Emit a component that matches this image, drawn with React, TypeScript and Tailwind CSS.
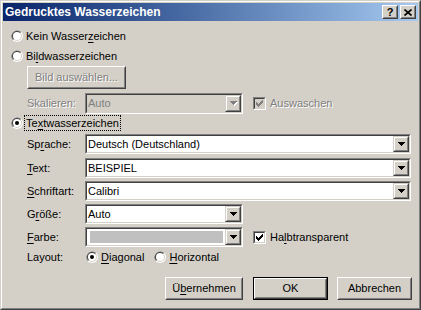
import type { ReactNode } from 'react';

// Classic Windows dialog: "Gedrucktes Wasserzeichen"

function Sunken({
  className = '',
  inner = '',
  children,
}: {
  className?: string;
  inner?: string;
  children?: ReactNode;
}) {
  return (
    <div
      className={`shrink-0 border border-t-[#808080] border-l-[#808080] border-r-white border-b-white ${className}`}
    >
      <div
        className={`flex h-full border border-t-[#404040] border-l-[#404040] border-r-[#d4d0c8] border-b-[#d4d0c8] ${inner}`}
      >
        {children}
      </div>
    </div>
  );
}

function Arrow({ disabled }: { disabled?: boolean }) {
  const fill = disabled ? '#808080' : '#000';
  return (
    <svg width="8" height="5" viewBox="0 0 8 5" shapeRendering="crispEdges">
      {disabled && (
        <g fill="#fff">
          <rect x="1" y="1" width="7" height="1" />
          <rect x="2" y="2" width="5" height="1" />
          <rect x="3" y="3" width="3" height="1" />
          <rect x="4" y="4" width="1" height="1" />
        </g>
      )}
      <g fill={fill}>
        <rect x="0" y="0" width="7" height="1" />
        <rect x="1" y="1" width="5" height="1" />
        <rect x="2" y="2" width="3" height="1" />
        <rect x="3" y="3" width="1" height="1" />
      </g>
    </svg>
  );
}

function DropButton({ disabled }: { disabled?: boolean }) {
  return (
    <div className="h-full w-[16px] shrink-0 border border-t-[#d4d0c8] border-l-[#d4d0c8] border-r-[#404040] border-b-[#404040]">
      <div className="flex h-full items-center justify-center border border-t-white border-l-white border-r-[#808080] border-b-[#808080] bg-[#d4d0c8] pl-px">
        <Arrow disabled={disabled} />
      </div>
    </div>
  );
}

function Combo({
  className,
  value,
  disabled,
  swatch,
}: {
  className: string;
  value?: string;
  disabled?: boolean;
  swatch?: boolean;
}) {
  return (
    <Sunken
      className={className}
      inner={disabled ? 'bg-[#d4d0c8]' : 'bg-white'}
    >
      <div
        className={`flex min-w-0 flex-1 items-center pl-px ${disabled ? 'text-[#808080]' : ''}`}
      >
        {swatch ? (
          <div className="mx-[2px] h-[12px] flex-1 bg-[#c0c0c0]" />
        ) : (
          value
        )}
      </div>
      <DropButton disabled={disabled} />
    </Sunken>
  );
}

function RadioDot({ checked }: { checked?: boolean }) {
  return (
    <svg width="12" height="12" viewBox="0 0 12 12" className="shrink-0">
      <circle cx="6" cy="6" r="6" fill="#fff" />
      <path d="M1.76 10.24 A6 6 0 0 1 10.24 1.76 Z" fill="#808080" />
      <circle cx="6" cy="6" r="5" fill="#d4d0c8" />
      <path d="M2.46 9.54 A5 5 0 0 1 9.54 2.46 Z" fill="#404040" />
      <circle cx="6" cy="6" r="4" fill="#fff" />
      {checked && <circle cx="6" cy="6" r="2" fill="#000" />}
    </svg>
  );
}

function Radio({
  checked,
  focused,
  className = '',
  children,
}: {
  checked?: boolean;
  focused?: boolean;
  className?: string;
  children: ReactNode;
}) {
  return (
    <div className={`flex h-[16px] items-center ${className}`}>
      <RadioDot checked={checked} />
      <span
        className={`ml-px border px-px leading-[14px] ${focused ? 'border-dotted border-black' : 'border-transparent'}`}
      >
        {children}
      </span>
    </div>
  );
}

function Check({ disabled }: { disabled?: boolean }) {
  const fill = disabled ? '#808080' : '#000';
  return (
    <Sunken
      className="h-[13px] w-[13px]"
      inner={`items-center justify-center ${disabled ? 'bg-[#d4d0c8]' : 'bg-white'}`}
    >
      <svg width="7" height="7" viewBox="0 0 7 7" shapeRendering="crispEdges">
        <g fill={fill}>
          <rect x="0" y="2" width="1" height="3" />
          <rect x="1" y="3" width="1" height="3" />
          <rect x="2" y="4" width="1" height="3" />
          <rect x="3" y="3" width="1" height="3" />
          <rect x="4" y="2" width="1" height="3" />
          <rect x="5" y="1" width="1" height="3" />
          <rect x="6" y="0" width="1" height="3" />
        </g>
      </svg>
    </Sunken>
  );
}

function U({ children }: { children: ReactNode }) {
  return <span className="underline underline-offset-[2px]">{children}</span>;
}

const grayed = 'text-[#808080] [text-shadow:1px_1px_0_#fff]';

function PushButton({
  className,
  isDefault,
  disabled,
  children,
}: {
  className: string;
  isDefault?: boolean;
  disabled?: boolean;
  children: ReactNode;
}) {
  if (isDefault) {
    return (
      <div className={`shrink-0 border border-black ${className}`}>
        <div className="h-full border border-t-white border-l-white border-r-[#404040] border-b-[#404040]">
          <div className="flex h-full items-center justify-center border border-transparent border-r-[#808080] border-b-[#808080]">
            {children}
          </div>
        </div>
      </div>
    );
  }
  return (
    <div
      className={`shrink-0 border border-t-white border-l-white border-r-[#404040] border-b-[#404040] ${className}`}
    >
      <div
        className={`flex h-full items-center justify-center border border-t-[#d4d0c8] border-l-[#d4d0c8] border-r-[#808080] border-b-[#808080] ${disabled ? grayed : ''}`}
      >
        {children}
      </div>
    </div>
  );
}

function CaptionButton({ children }: { children: ReactNode }) {
  return (
    <div className="h-[14px] w-[16px] border border-t-white border-l-white border-r-[#404040] border-b-[#404040] bg-[#d4d0c8]">
      <div className="flex h-full items-center justify-center border border-transparent border-r-[#808080] border-b-[#808080]">
        {children}
      </div>
    </div>
  );
}

function FieldRow({
  label,
  className = '',
  children,
}: {
  label: ReactNode;
  className?: string;
  children: ReactNode;
}) {
  return (
    <div className={`ml-[24px] flex items-center ${className}`}>
      <span className="w-[58px] shrink-0">{label}</span>
      {children}
    </div>
  );
}

export default function App() {
  return (
    <div className="h-[310px] w-[421px] select-none border border-t-[#d4d0c8] border-l-[#d4d0c8] border-r-[#404040] border-b-[#404040] font-['Liberation_Sans',Arial,sans-serif] text-[11px] leading-none text-black">
      <div className="flex h-full flex-col border border-t-white border-l-white border-r-[#808080] border-b-[#808080] bg-[#d4d0c8] p-px">
        {/* title bar */}
        <div className="flex h-[18px] shrink-0 items-center bg-linear-to-r from-[#0a246a] to-[#a6caf0] pl-[2px] pr-[2px]">
          <span className="flex-1 text-[12px] font-bold text-white">
            Gedrucktes Wasserzeichen
          </span>
          <CaptionButton>
            <span className="text-[11px] font-bold leading-none">?</span>
          </CaptionButton>
          <div className="ml-[2px]">
            <CaptionButton>
              <svg width="8" height="7" viewBox="0 0 8 7">
                <path
                  d="M0.5 0.5 L7.5 6.5 M7.5 0.5 L0.5 6.5"
                  stroke="#000"
                  strokeWidth="1.6"
                />
              </svg>
            </CaptionButton>
          </div>
        </div>

        {/* body */}
        <div className="flex flex-col">
          <Radio className="ml-[8px] mt-[7px]">
            Kein Wasser<U>z</U>eichen
          </Radio>
          <Radio className="ml-[8px] mt-[4px]">
            Bi<U>l</U>dwasserzeichen
          </Radio>

          <PushButton disabled className="ml-[24px] mt-[2px] h-[23px] w-[99px]">
            Bild auswählen...
          </PushButton>

          <FieldRow className="mt-[4px] h-[21px]" label={<span className={grayed}>Skalieren:</span>}>
            <Combo className="h-[21px] w-[158px]" value="Auto" disabled />
            <div className="ml-[10px]">
              <Check disabled />
            </div>
            <span className={`ml-[4px] ${grayed}`}>Auswaschen</span>
          </FieldRow>

          <Radio checked focused className="ml-[8px] mt-[1px]">
            Te<U>x</U>twasserzeichen
          </Radio>

          <FieldRow className="mt-[3px]" label={<>Sp<U>r</U>ache:</>}>
            <Combo className="h-[20px] w-[326px]" value="Deutsch (Deutschland)" />
          </FieldRow>
          <FieldRow className="mt-[4px]" label={<><U>T</U>ext:</>}>
            <Combo className="h-[20px] w-[326px]" value="BEISPIEL" />
          </FieldRow>
          <FieldRow className="mt-[3px]" label={<><U>S</U>chriftart:</>}>
            <Combo className="h-[20px] w-[326px]" value="Calibri" />
          </FieldRow>
          <FieldRow className="mt-[3px]" label={<>G<U>r</U>öße:</>}>
            <Combo className="h-[20px] w-[158px]" value="Auto" />
          </FieldRow>
          <FieldRow className="mt-[3px]" label={<><U>F</U>arbe:</>}>
            <Combo className="h-[20px] w-[158px]" swatch />
            <div className="ml-[10px]">
              <Check />
            </div>
            <span className="ml-[4px]">
              Ha<U>l</U>btransparent
            </span>
          </FieldRow>

          <FieldRow className="mt-[2px] h-[16px]" label="Layout:">
            <Radio checked className="ml-px">
              <U>D</U>iagonal
            </Radio>
            <Radio className="ml-[8px]">
              <U>H</U>orizontal
            </Radio>
          </FieldRow>

          <div className="ml-[162px] mt-[12px] flex">
            <PushButton className="h-[23px] w-[78px]">
              Ü<U>b</U>ernehmen
            </PushButton>
            <PushButton isDefault className="ml-[10px] h-[23px] w-[75px]">
              OK
            </PushButton>
            <PushButton className="ml-[9px] h-[23px] w-[75px]">
              Abbrechen
            </PushButton>
          </div>
        </div>
      </div>
    </div>
  );
}
